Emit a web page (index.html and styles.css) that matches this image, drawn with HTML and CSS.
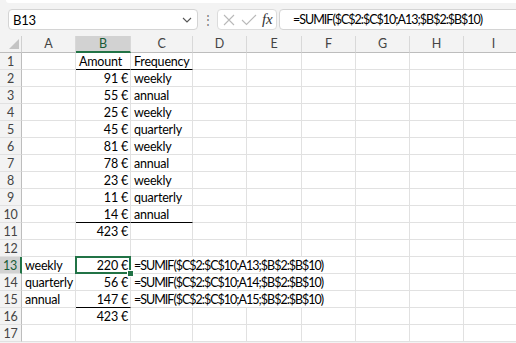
FILE: index.html
```html
<!DOCTYPE html>
<html lang="en">
<head>
    <meta charset="UTF-8">
    <meta name="viewport" content="width=device-width, initial-scale=1.0">
    <title>Book1 - Excel</title>
    <link rel="stylesheet" href="styles.css">
</head>
<body>
    <div class="top">
        <div class="ribbon-edge"></div>
        <div class="formula-row">
            <div class="name-box">
                <span>B13</span>
                <svg class="chev" width="10" height="6" viewBox="0 0 10 6"><path d="M1 1l4 4 4-4" fill="none" stroke="#555" stroke-width="1.1"/></svg>
            </div>
            <div class="grip">&#8942;</div>
            <div class="fx-box">
                <svg width="14" height="14" viewBox="0 0 14 14"><path d="M2 2l10 10M12 2L2 12" stroke="#b9b9b9" stroke-width="1.1"/></svg>
                <svg width="16" height="14" viewBox="0 0 16 14"><path d="M1 7l4.5 4.5L15 2" fill="none" stroke="#b9b9b9" stroke-width="1.1"/></svg>
                <span class="fx">fx</span>
            </div>
            <div class="formula">=SUMIF($C$2:$C$10;A13;$B$2:$B$10)</div>
        </div>
    </div>
    <div class="sheet" id="sheet"></div>
    <script>
        let sheet = document.getElementById('sheet');
        let cols = ['A', 'B', 'C', 'D', 'E', 'F', 'G', 'H', 'I'];
        let data = {
            1: { B: 'Amount', C: 'Frequency' },
            2: { B: '91 €', C: 'weekly' },
            3: { B: '55 €', C: 'annual' },
            4: { B: '25 €', C: 'weekly' },
            5: { B: '45 €', C: 'quarterly' },
            6: { B: '81 €', C: 'weekly' },
            7: { B: '78 €', C: 'annual' },
            8: { B: '23 €', C: 'weekly' },
            9: { B: '11 €', C: 'quarterly' },
            10: { B: '14 €', C: 'annual' },
            11: { B: '423 €' },
            13: { A: 'weekly', B: '220 €', C: '=SUMIF($C$2:$C$10;A13;$B$2:$B$10)' },
            14: { A: 'quarterly', B: '56 €', C: '=SUMIF($C$2:$C$10;A14;$B$2:$B$10)' },
            15: { A: 'annual', B: '147 €', C: '=SUMIF($C$2:$C$10;A15;$B$2:$B$10)' },
            16: { B: '423 €' }
        };
        let borders = ['B1', 'C1', 'B10', 'C10', 'B15'];

        function cell(cls, text) {
            let div = document.createElement('div');
            div.className = cls;
            div.textContent = text || '';
            sheet.appendChild(div);
            return div;
        }

        cell('corner');
        cols.forEach(c => cell('col-head' + (c === 'B' ? ' active' : ''), c));

        for (let r = 1; r <= 17; r++) {
            cell('row-head' + (r === 13 ? ' active' : ''), r);
            let row = data[r] || {};
            for (let i = 0; i < cols.length; i++) {
                let c = cols[i];
                let value = row[c] || '';
                let cls = 'cell';
                if (value.endsWith('€')) cls += ' num';
                if (borders.includes(c + r)) cls += ' line';
                if (c + r === 'B13') cls += ' selected';
                let div = cell(cls, value);
                // long formulas run over the empty cells to their right
                if (value.startsWith('=')) {
                    div.classList.add('spill');
                    i += 3;
                }
            }
        }
    </script>
</body>
</html>
```

FILE: styles.css
```css
body {
    margin: 0;
    background: #f3f3f3;
    font-family: Lato, "Open Sans", sans-serif;
    font-size: 12px;
    letter-spacing: -0.2px;
    color: #000;
    overflow: hidden;
}
.top {
    height: 36px;
}
.ribbon-edge {
    height: 3px;
    margin-left: 6px;
    background: #fff;
    border-radius: 0 0 0 4px;
}
.formula-row {
    display: flex;
    align-items: center;
    height: 21px;
    margin-top: 6px;
    padding-left: 8px;
}
.name-box {
    width: 190px;
    height: 21px;
    box-sizing: border-box;
    background: #fff;
    border: 1px solid #d4d4d4;
    border-radius: 4px;
    display: flex;
    align-items: center;
    justify-content: space-between;
    padding: 0 5px 0 4px;
    font-size: 13px;
}
.grip {
    width: 19px;
    text-align: center;
    color: #777;
    font-size: 12px;
}
.fx-box {
    width: 60px;
    height: 21px;
    box-sizing: border-box;
    background: #fff;
    border: 1px solid #dcdcdc;
    border-radius: 4px;
    display: flex;
    align-items: center;
    gap: 5px;
    padding-left: 4px;
}
.fx {
    font-family: "Liberation Serif", serif;
    font-style: italic;
    font-size: 15px;
    color: #333;
}
.formula {
    flex: 1;
    height: 21px;
    box-sizing: border-box;
    margin-left: 2px;
    margin-right: -6px;
    background: #fff;
    border: 1px solid #d4d4d4;
    border-radius: 4px;
    padding-left: 13px;
    line-height: 19px;
    white-space: nowrap;
    font-size: 12.5px;
    letter-spacing: -1px;
}
.sheet {
    display: grid;
    grid-template-columns: 22px 54px 55px 62px 54px 55px 54px 54px 54px 60px;
    grid-template-rows: 17px;
    grid-auto-rows: 17px;
    background: #fff;
    font-size: 12.5px;
}
.corner, .col-head, .row-head {
    background: #f3f3f3;
    color: #444;
    box-sizing: border-box;
    text-align: center;
    line-height: 16px;
}
.row-head {
    line-height: 17px;
}
.corner {
    position: relative;
    border-right: 1px solid #d0d0d0;
    border-bottom: 1px solid #bdbdbd;
}
.corner::after {
    content: '';
    position: absolute;
    right: 2px;
    bottom: 3px;
    border-left: 10px solid transparent;
    border-bottom: 10px solid #c4c4c4;
}
.col-head {
    border-right: 1px solid #d8d8d8;
    border-bottom: 1px solid #bdbdbd;
}
.col-head:last-child {
    border-right: none;
}
.row-head {
    border-right: 1px solid #bdbdbd;
    border-bottom: 1px solid #e1e1e1;
}
.col-head.active {
    background: #d2d2d2;
    color: #185c37;
    border-bottom: 2px solid #217346;
}
.row-head.active {
    background: #d2d2d2;
    color: #185c37;
    border-right: 2px solid #217346;
}
.cell {
    box-sizing: border-box;
    border-right: 1px solid #e1e1e1;
    border-bottom: 1px solid #e1e1e1;
    padding: 0 3px;
    line-height: 17px;
    white-space: nowrap;
    overflow: hidden;
}
.cell.num {
    text-align: right;
    padding-right: 2px;
}
.cell.line {
    border-bottom-color: #000;
}
.cell.spill {
    grid-column: span 4;
    letter-spacing: -1px;
}
.cell.selected {
    position: relative;
    overflow: visible;
}
.cell.selected::after {
    content: '';
    position: absolute;
    left: -1px;
    top: -1px;
    right: -1px;
    bottom: -1px;
    border: 2px solid #217346;
}
.cell.selected::before {
    content: '';
    position: absolute;
    right: -4px;
    bottom: -4px;
    width: 5px;
    height: 5px;
    background: #217346;
    border: 1px solid #fff;
    z-index: 1;
}
```
